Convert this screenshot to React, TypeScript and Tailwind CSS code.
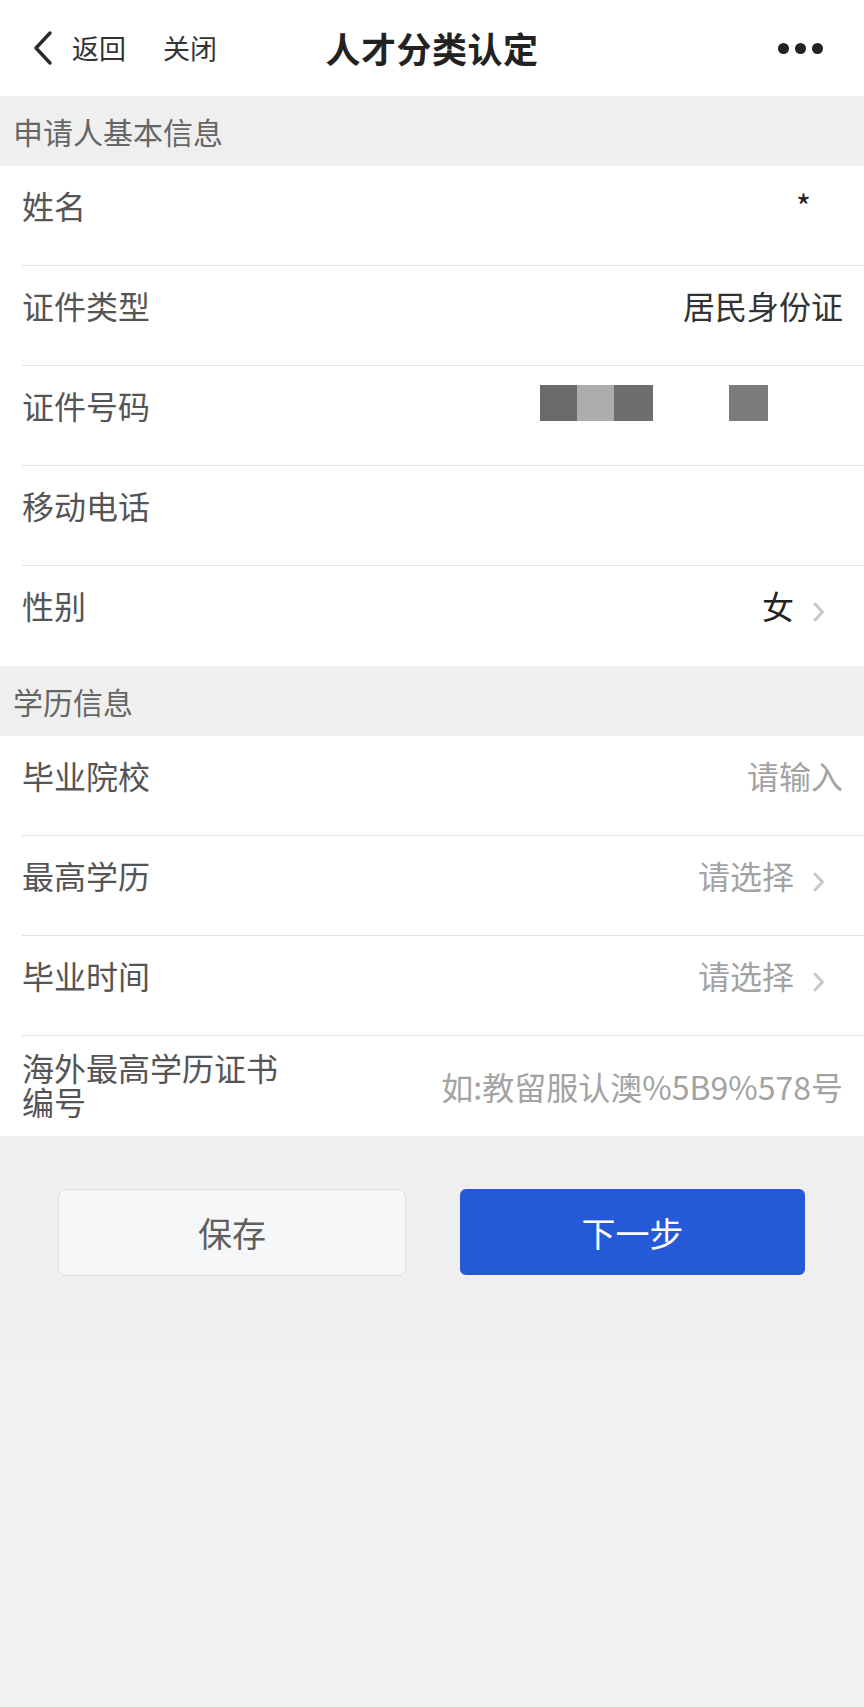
import React from "react";

const FONT = { fontFamily: '"Noto Sans CJK SC", "Noto Sans", sans-serif' };

function Chevron() {
  return (
    <svg width="14" height="22" viewBox="0 0 14 22" className="ml-[18px] mr-[17px] mt-[15px] shrink-0">
      <path d="M3 3 L10.5 11 L3 19" fill="none" stroke="#c8c8c8" strokeWidth="3" strokeLinecap="round" strokeLinejoin="round" />
    </svg>
  );
}

function Row({ label, children, last }: { label: React.ReactNode; children?: React.ReactNode; last?: boolean }) {
  return (
    <div className={`ml-[22px] h-[100px] flex items-start justify-between pt-[20px] pr-[21px] ${last ? "" : "border-b border-[#e3e3e3]"}`}>
      <div className="text-[32px] leading-[38px] text-[#555]">{label}</div>
      <div className="flex items-start">{children}</div>
    </div>
  );
}

function Section({ title }: { title: string }) {
  return (
    <div className="h-[70px] bg-[#efefef] flex items-center pl-[13px] text-[30px] text-[#666]">{title}</div>
  );
}

export default function App() {
  return (
    <div style={FONT} className="w-[864px] min-h-[1707px] flex flex-col bg-[#f2f2f2]">
      {/* Nav bar */}
      <div className="h-[96px] bg-white grid grid-cols-[1fr_auto_1fr] items-center">
        <div className="flex items-center pl-[32px]">
          <svg width="22" height="36" viewBox="0 0 22 36" className="shrink-0">
            <path d="M18 3 L4 18 L18 33" fill="none" stroke="#2a2a2a" strokeWidth="3.4" strokeLinecap="round" strokeLinejoin="round" />
          </svg>
          <span className="ml-[18px] text-[27px] text-[#333]">返回</span>
          <span className="ml-[37px] text-[27px] text-[#333]">关闭</span>
        </div>
        <div className="text-[35px] font-bold text-[#222] tracking-[0.5px]">人才分类认定</div>
        <div className="flex items-center justify-end pr-[41px] gap-[6px]">
          <span className="w-[11px] h-[11px] rounded-full bg-[#222]" />
          <span className="w-[11px] h-[11px] rounded-full bg-[#222]" />
          <span className="w-[11px] h-[11px] rounded-full bg-[#222]" />
        </div>
      </div>

      <Section title="申请人基本信息" />
      <div className="bg-white">
        <Row label="姓名">
          <span className="text-[32px] leading-[38px] text-[#222] mr-[32px]">*</span>
        </Row>
        <Row label="证件类型">
          <span className="text-[32px] leading-[38px] text-[#333]">居民身份证</span>
        </Row>
        <Row label="证件号码">
          <div className="flex mr-[75px] -mt-[1px]">
            <div className="w-[37px] h-[36px] bg-[#6a6a6a]" />
            <div className="w-[37px] h-[36px] bg-[#adadad]" />
            <div className="w-[39px] h-[36px] bg-[#6e6e6e]" />
            <div className="w-[76px]" />
            <div className="w-[39px] h-[36px] bg-[#7c7c7c]" />
          </div>
        </Row>
        <Row label="移动电话" />
        <Row label="性别" last>
          <span className="text-[32px] leading-[38px] text-[#222]">女</span>
          <Chevron />
        </Row>
      </div>

      <Section title="学历信息" />
      <div className="bg-white">
        <Row label="毕业院校">
          <span className="text-[32px] leading-[38px] text-[#a3a3a3]">请输入</span>
        </Row>
        <Row label="最高学历">
          <span className="text-[32px] leading-[38px] text-[#a3a3a3]">请选择</span>
          <Chevron />
        </Row>
        <Row label="毕业时间">
          <span className="text-[32px] leading-[38px] text-[#a3a3a3]">请选择</span>
          <Chevron />
        </Row>
        <div className="ml-[22px] h-[100px] flex items-center justify-between pr-[21px]">
          <div className="w-[275px] text-[32px] leading-[34px] text-[#555] -mt-[4px]">海外最高学历证书编号</div>
          <span className="text-[32px] leading-[38px] text-[#a3a3a3]">如:教留服认澳%5B9%578号</span>
        </div>
      </div>

      {/* Buttons */}
      <div className="h-[223px] bg-[#efefef] pt-[53px] pl-[58px] flex items-start gap-[54px]">
        <div className="w-[348px] h-[87px] rounded-[8px] bg-[#f6f7f9] border border-[#dedede] flex items-center justify-center text-[34px] text-[#5f5f5f]">保存</div>
        <div className="w-[345px] h-[86px] rounded-[6px] bg-[#2459d7] flex items-center justify-center text-[34px] text-white">下一步</div>
      </div>
      <div className="flex-1 bg-[#f2f2f2]" />
    </div>
  );
}
